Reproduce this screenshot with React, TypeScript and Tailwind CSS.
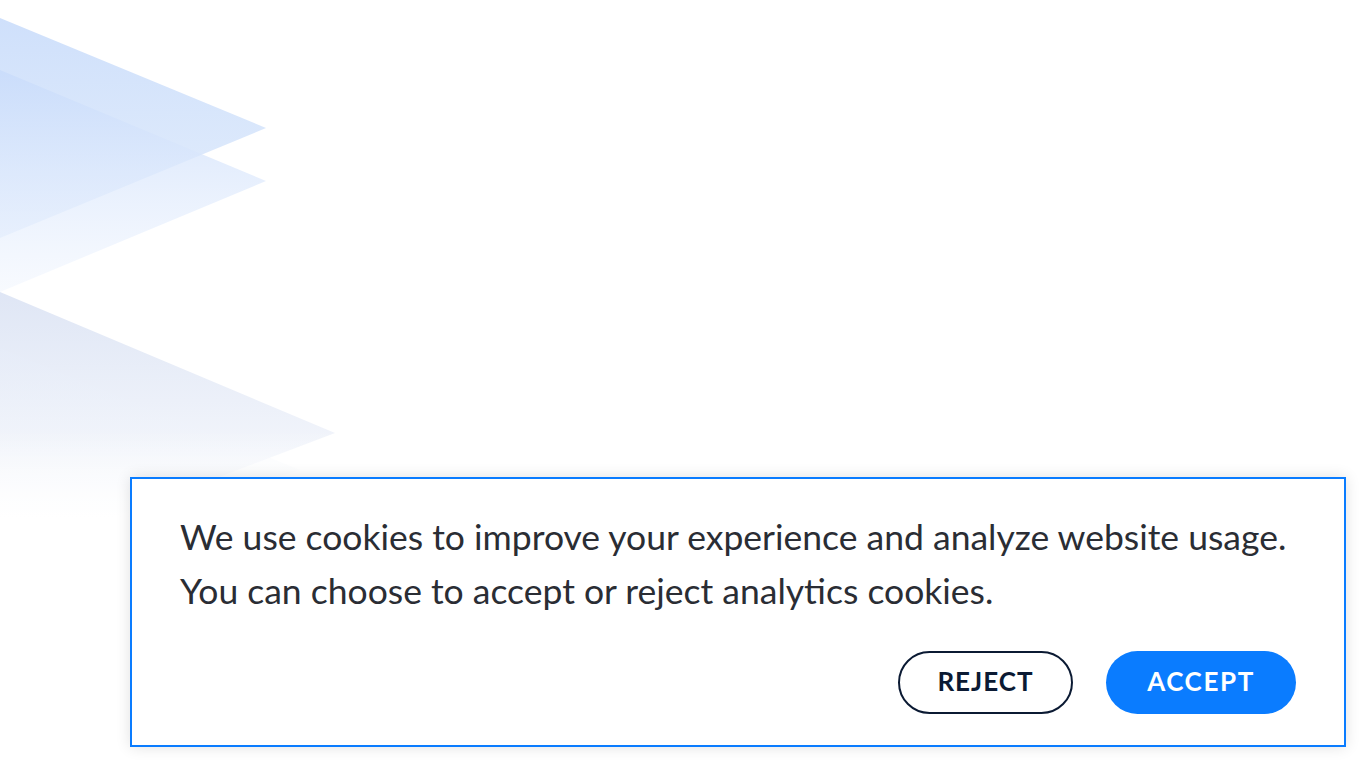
import React from "react";

function Background() {
  return (
    <svg
      className="absolute left-0 top-0 pointer-events-none"
      width="400"
      height="520"
      viewBox="0 0 400 520"
    >
      <defs>
        <linearGradient id="g1" x1="0" y1="0" x2="0" y2="1">
          <stop offset="0" stopColor="#cfe0fb" />
          <stop offset="1" stopColor="#e4eefc" />
        </linearGradient>
        <linearGradient id="g2" x1="0" y1="0" x2="0" y2="1">
          <stop offset="0" stopColor="#c9dcfb" stopOpacity="0.85" />
          <stop offset="1" stopColor="#f3f7fe" stopOpacity="0.6" />
        </linearGradient>
        <linearGradient id="g3" x1="0" y1="0" x2="0" y2="1">
          <stop offset="0" stopColor="#dfe6f5" />
          <stop offset="1" stopColor="#ffffff" />
        </linearGradient>
        <linearGradient id="g4" x1="0" y1="0" x2="0" y2="1">
          <stop offset="0" stopColor="#e6ecf8" stopOpacity="0.7" />
          <stop offset="1" stopColor="#ffffff" stopOpacity="0" />
        </linearGradient>
        <linearGradient id="fade" x1="0" y1="0" x2="0" y2="1">
          <stop offset="0" stopColor="#ffffff" stopOpacity="0" />
          <stop offset="1" stopColor="#ffffff" stopOpacity="1" />
        </linearGradient>
      </defs>
      <polygon points="0,18 266,128 0,238" fill="url(#g1)" />
      <polygon points="0,70 266,181 0,292" fill="url(#g2)" />
      <polygon points="0,292 335,433 0,560" fill="url(#g3)" />
      <polygon points="0,348 300,470 0,560" fill="url(#g4)" />
      <rect x="0" y="430" width="400" height="90" fill="url(#fade)" />
    </svg>
  );
}

export default function App() {
  return (
    <div
      className="relative w-full h-[768px] overflow-hidden bg-white flex flex-col justify-end items-end pr-[20px] pb-[21px]"
      style={{ fontFamily: "Lato, 'Open Sans', sans-serif" }}
    >
      <Background />
      <div className="relative w-[1216px] border-2 border-[#0a7cff] bg-white shadow-[0_0_14px_rgba(0,0,0,0.12)] pt-[31px] pl-[48px] pr-[48px] pb-[31px]">
        <p className="text-[35.5px] leading-[54px] text-[#2a2d34] whitespace-nowrap">
          We use cookies to improve your experience and analyze website usage.
          <br />
          You can choose to accept or reject analytics cookies.
        </p>
        <div className="mt-[33px] flex justify-end gap-[33px]">
          <button className="w-[175px] h-[63px] rounded-full border-2 border-[#0b1a33] bg-white text-[#0b1a33] text-[26px] font-bold tracking-[1px] pb-[3px]">
            REJECT
          </button>
          <button className="w-[190px] h-[63px] rounded-full bg-[#0a7cff] text-white text-[26px] font-bold tracking-[1.6px] pb-[3px]">
            ACCEPT
          </button>
        </div>
      </div>
    </div>
  );
}
